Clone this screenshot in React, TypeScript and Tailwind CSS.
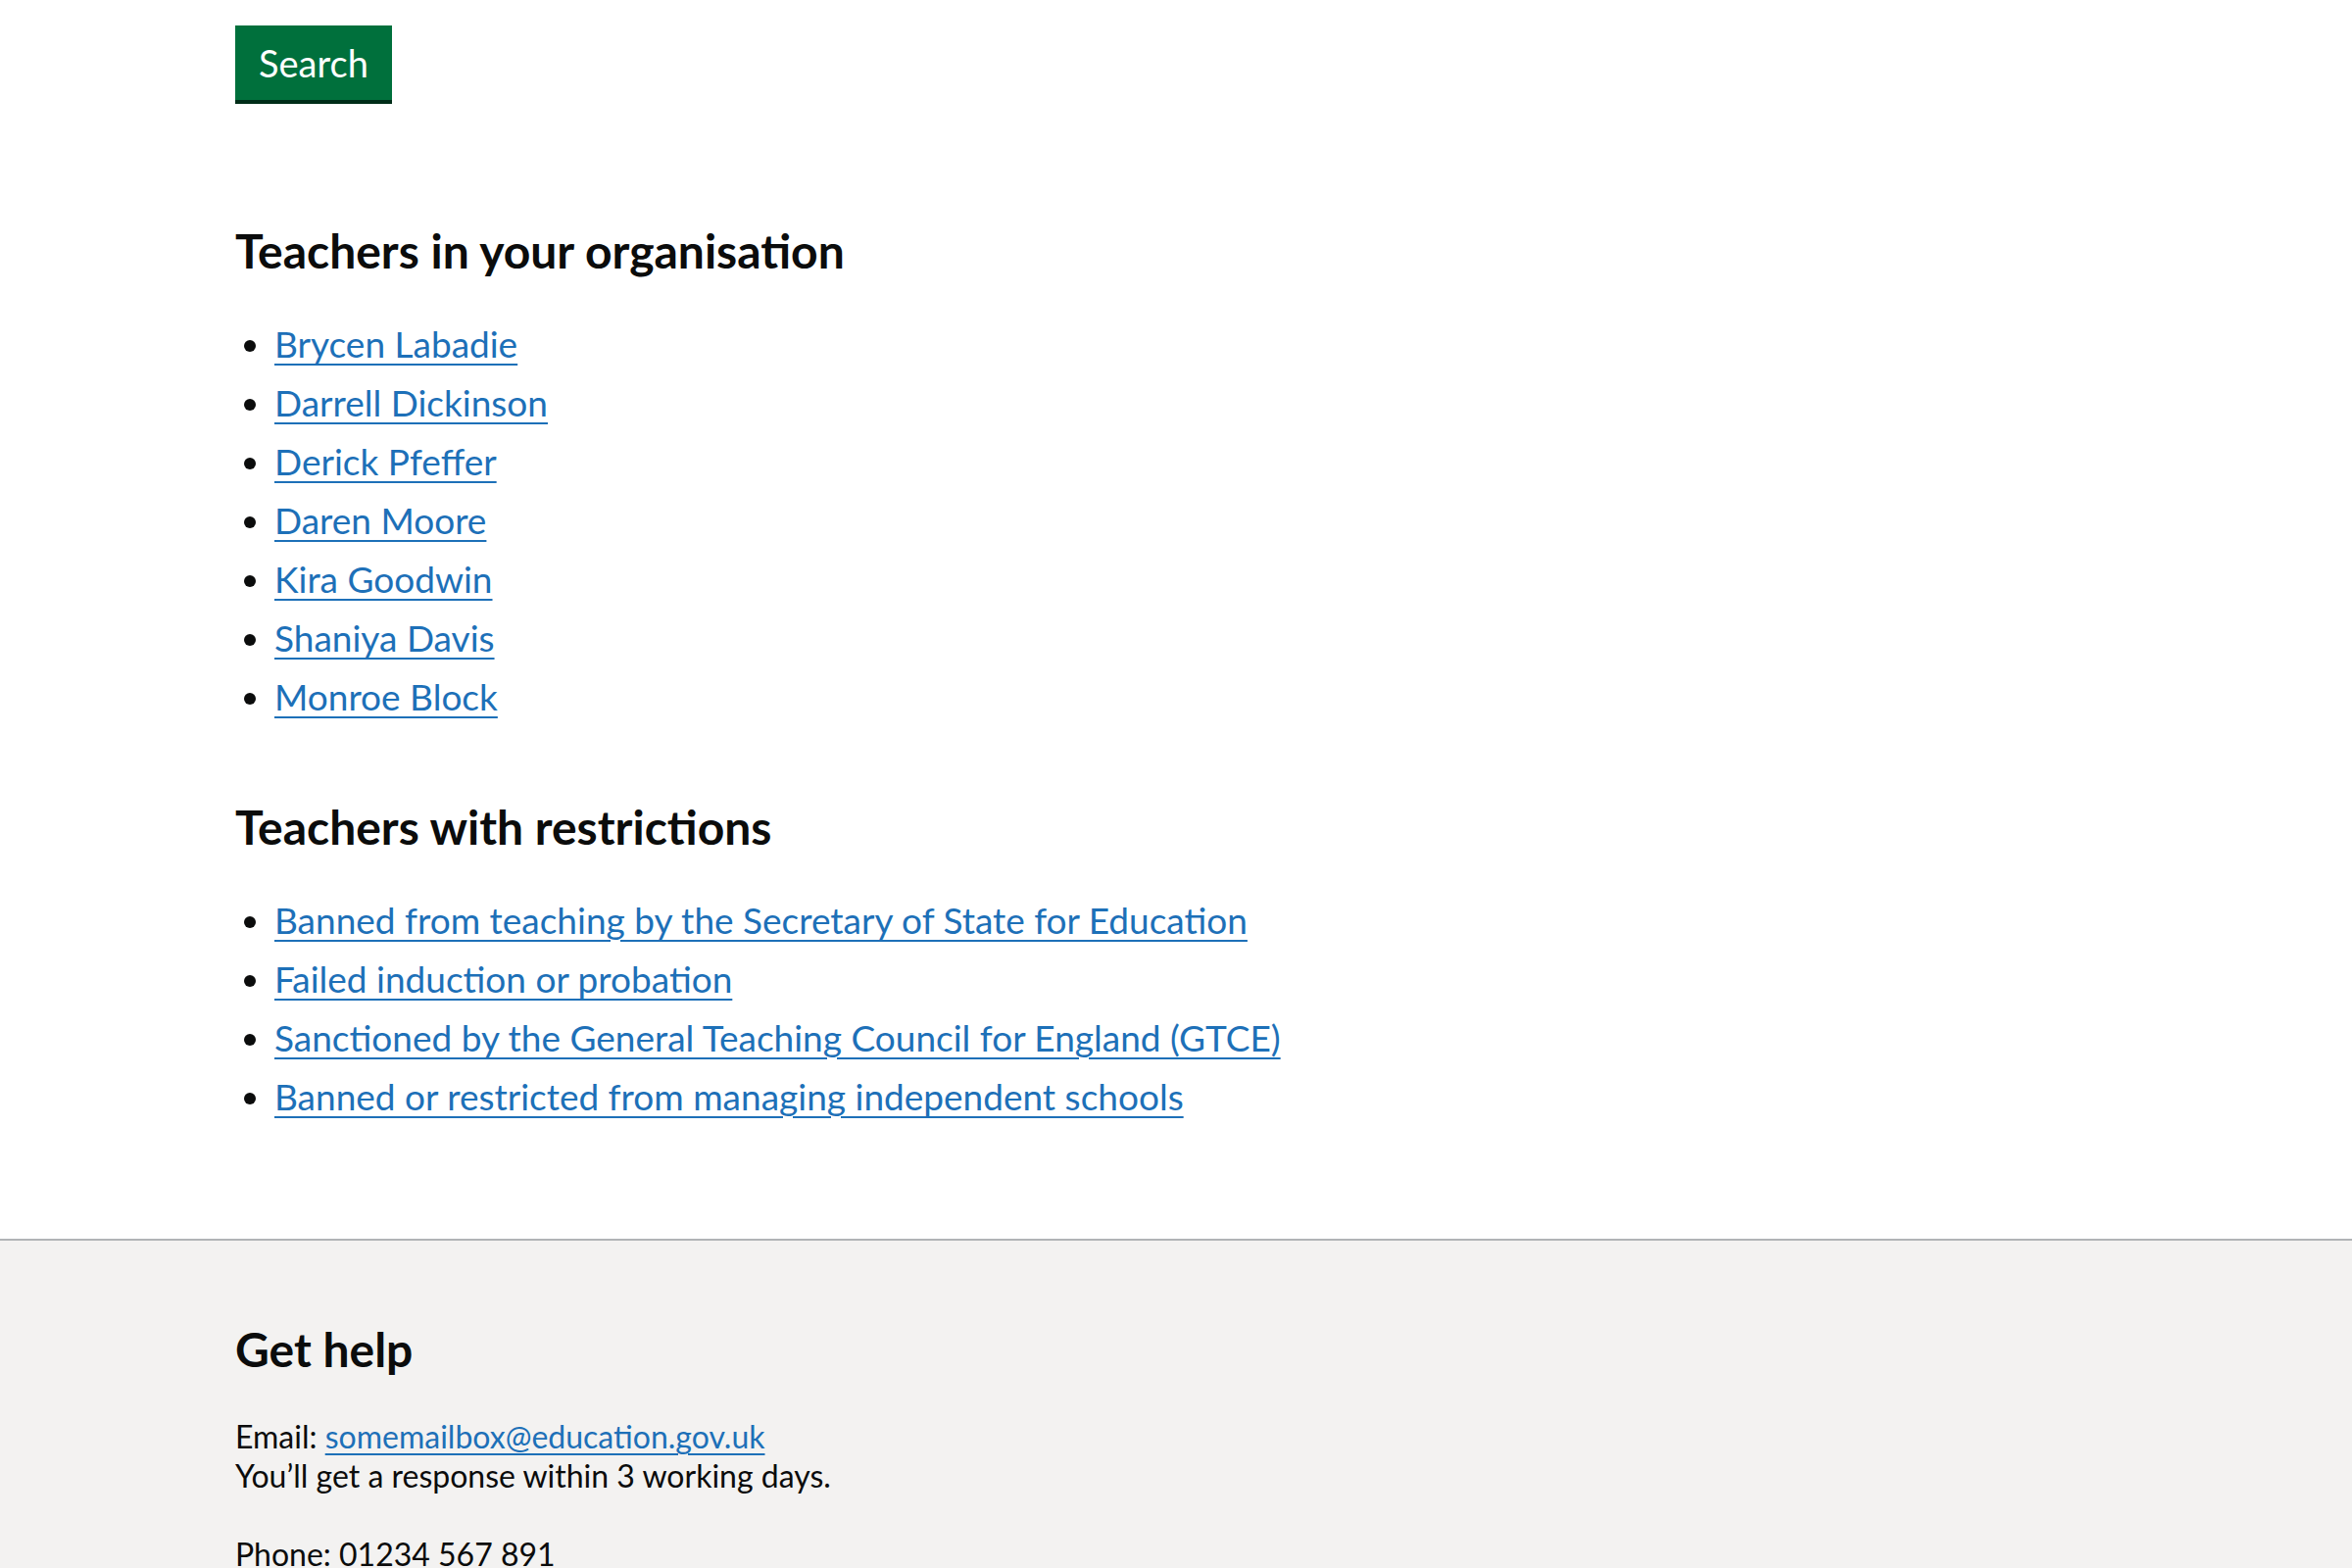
import React from "react";

const teachers = [
  "Brycen Labadie",
  "Darrell Dickinson",
  "Derick Pfeffer",
  "Daren Moore",
  "Kira Goodwin",
  "Shaniya Davis",
  "Monroe Block",
];

const restrictions = [
  "Banned from teaching by the Secretary of State for Education",
  "Failed induction or probation",
  "Sanctioned by the General Teaching Council for England (GTCE)",
  "Banned or restricted from managing independent schools",
];

function LinkList({ items, className }: { items: string[]; className: string }) {
  return (
    <ul className={"list-disc pl-[40px] " + className}>
      {items.map((t) => (
        <li key={t} className="mb-[10px] text-[37px] leading-[50px]">
          <a
            href="#"
            className="text-[#1d70b8] underline decoration-2 underline-offset-[6px]"
          >
            {t}
          </a>
        </li>
      ))}
    </ul>
  );
}

export default function App() {
  return (
    <div className="min-h-screen bg-white font-[Lato,sans-serif] text-[#0b0c0c]">
      <main className="px-[240px] pt-[26px]">
        <div className="mb-[124px]">
          <button className="block bg-[#00703c] px-[24px] pt-[19px] pb-[19px] text-[38px] leading-[38px] text-white shadow-[0_4px_0_#002d18]">
            Search
          </button>
        </div>
        <h2 className="mb-[40px] text-[48px] font-bold leading-[60px]">
          Teachers in your organisation
        </h2>
        <LinkList items={teachers} className="mb-[78px]" />
        <h2 className="mb-[40px] text-[48px] font-bold leading-[60px]">
          Teachers with restrictions
        </h2>
        <LinkList items={restrictions} className="mb-[120px]" />
      </main>
      <footer className="border-t-2 border-[#b1b4b6] bg-[#f3f2f1] px-[240px] pt-[81px] pb-[80px]">
        <h2 className="mb-[39px] text-[48px] font-bold leading-[60px]">Get help</h2>
        <p className="mb-[40px] text-[32px] leading-[40px]">
          Email:{" "}
          <a
            href="#"
            className="text-[#1d70b8] underline decoration-2 underline-offset-[5px]"
          >
            somemailbox@education.gov.uk
          </a>
          <br />
          You’ll get a response within 3 working days.
        </p>
        <p className="text-[32px] leading-[40px]">Phone: 01234 567 891</p>
      </footer>
    </div>
  );
}
